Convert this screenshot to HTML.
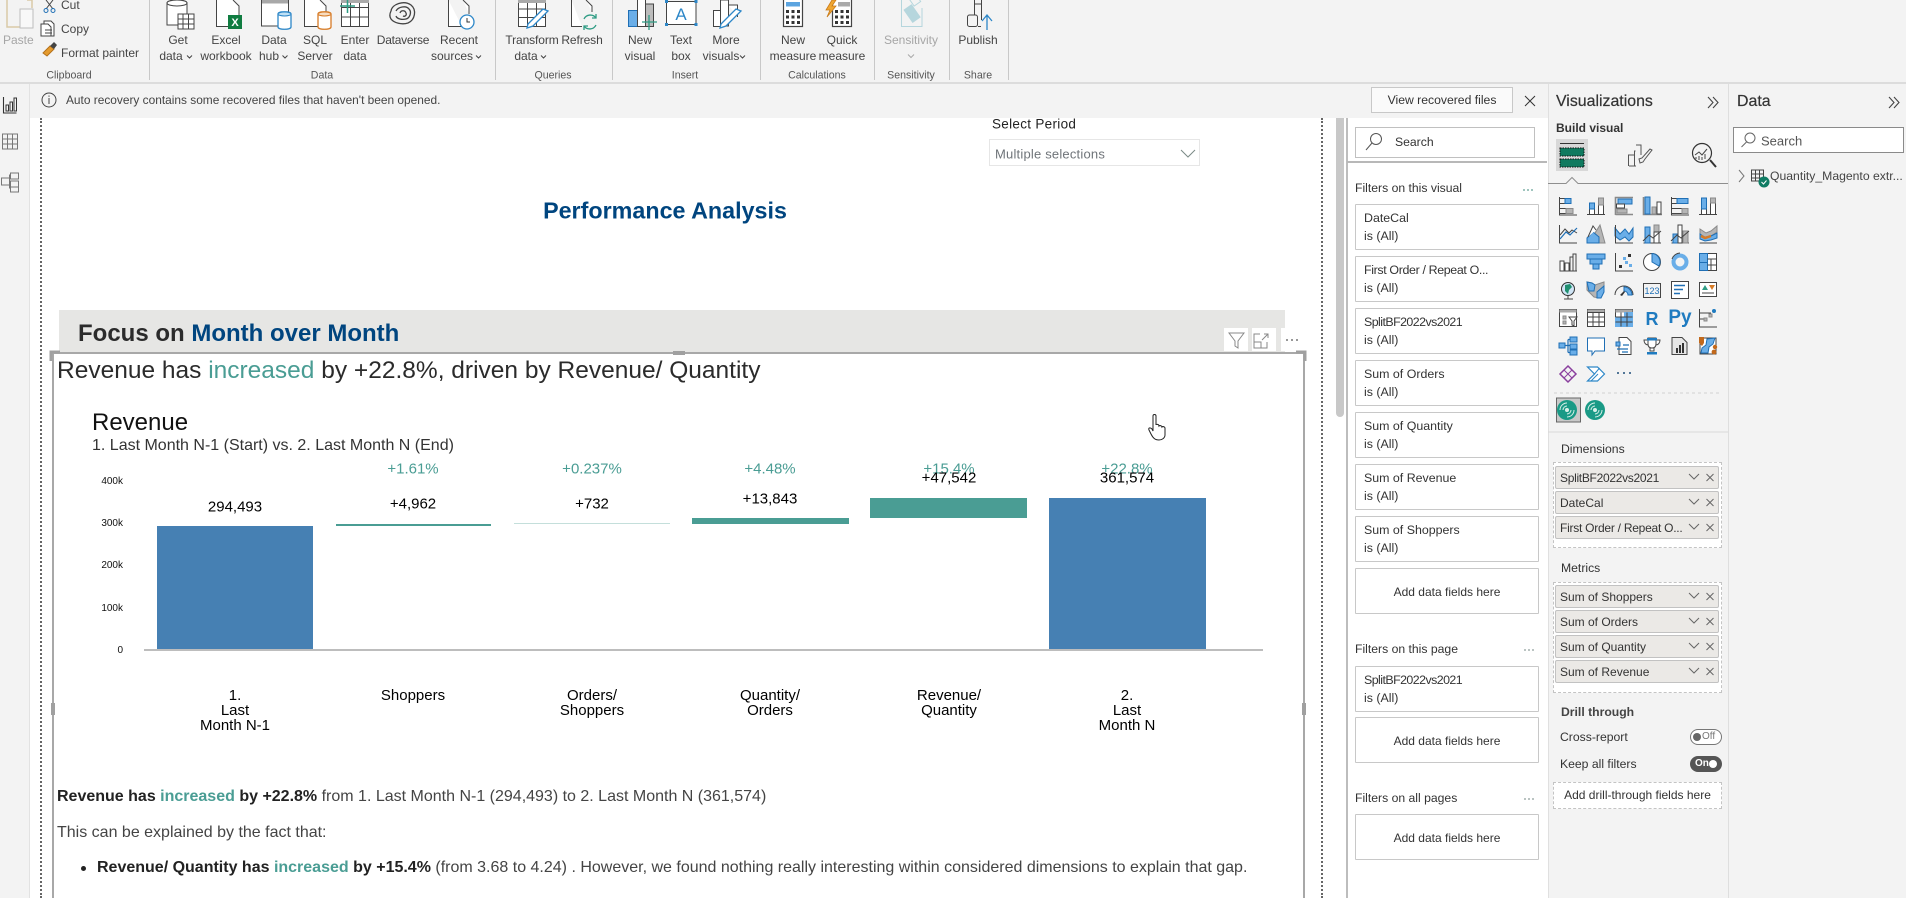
<!DOCTYPE html>
<html lang="en"><head><meta charset="utf-8"><title>Power BI Desktop</title>
<style>
html,body{margin:0;padding:0;width:1906px;height:898px;overflow:hidden;background:#fff;font-family:"Liberation Sans",Arial,sans-serif;color:#333}
div{box-sizing:border-box}
.a{position:absolute}
.t,.c{position:absolute;white-space:nowrap;line-height:1}
.t{transform:translateY(-50%)}
.c{transform:translate(-50%,-50%);text-align:center}
.r .c,.r .t{font-size:12px;color:#444}
.r .l{font-size:10.6px;color:#555}
.sep{position:absolute;top:0;height:80px;width:1px;background:#c8c8c8}
.card{position:absolute;left:1355px;width:184px;height:46px;background:#fff;border:1.5px solid #c8c8c8;border-radius:1px}
.card span{position:absolute;left:8px;font-size:12.4px;color:#333;white-space:nowrap;line-height:1;transform:translateY(-50%)}
.card .x{left:0;right:0;text-align:center;top:23px;font-size:12px}
.pill{position:absolute;left:1555px;width:164px;height:23px;background:#ebe9e6;border:1px solid #c2c2c2;border-radius:2px;font-size:12px;line-height:22px;padding-left:4px;color:#333;white-space:nowrap;overflow:hidden}
.dash{position:absolute;left:1553px;width:169px;border:1px dashed #c4c4c4;background:#fff}
.h{font-size:12.2px;color:#333}
.cv{font-family:"Liberation Sans",Arial,sans-serif;color:#000;font-size:15px}
.teal{color:#4a9d94}
.pct{color:#4a9d94;font-size:15px}
svg text{font-family:"Liberation Sans",Arial,sans-serif}
.k{stroke:#444;fill:none;stroke-width:1}
.w{stroke:#444;fill:#fff;stroke-width:1}
.b{fill:#6aaee8;stroke:#1f6fb5;stroke-width:1}
.u{fill:none;stroke:#1f6fb5;stroke-width:1.2}
.g{fill:#b5b5b5;stroke:#8a8a8a;stroke-width:1}
</style></head><body>

<!-- backgrounds -->
<div class="a" style="left:0;top:0;width:1906px;height:82px;background:#f3f3f3"></div>
<div class="a" style="left:0;top:82px;width:1906px;height:2px;background:#dcdcdc"></div>
<div class="a" style="left:0;top:84px;width:1906px;height:34px;background:#f3f3f3"></div>
<div class="a" style="left:0;top:84px;width:30px;height:814px;background:#f3f3f3;border-right:1px solid #e2e2e2"></div>
<div class="a" style="left:1336px;top:118px;width:8px;height:299px;background:#c8c8c8;border-radius:0 0 4px 4px"></div>
<div class="a" style="left:1346px;top:118px;width:2px;height:780px;background:#bdbdbd"></div>
<div class="a" style="left:1548px;top:84px;width:358px;height:814px;background:#f3f3f3;border-left:1px solid #e0e0e0"></div>
<div class="a" style="left:1728px;top:84px;width:1px;height:814px;background:#dedede"></div>

<!-- ribbon text -->
<div class="r">
<div class="t" style="left:3px;top:40px;color:#a6a6a6">Paste</div>
<div class="t" style="left:61px;top:5px">Cut</div>
<div class="t" style="left:61px;top:29px">Copy</div>
<div class="t" style="left:61px;top:53px">Format painter</div>
<div class="c l" style="left:69px;top:76px">Clipboard</div>
<div class="c" style="left:178px;top:40px">Get</div><div class="c" style="left:171px;top:56px">data</div>
<div class="c" style="left:226px;top:40px">Excel</div><div class="c" style="left:226px;top:56px">workbook</div>
<div class="c" style="left:274px;top:40px">Data</div><div class="c" style="left:269px;top:56px">hub</div>
<div class="c" style="left:315px;top:40px">SQL</div><div class="c" style="left:315px;top:56px">Server</div>
<div class="c" style="left:355px;top:40px">Enter</div><div class="c" style="left:355px;top:56px">data</div>
<div class="c" style="left:403px;top:40px;letter-spacing:-.25px">Dataverse</div>
<div class="c" style="left:459px;top:40px">Recent</div><div class="c" style="left:452px;top:56px">sources</div>
<div class="c l" style="left:322px;top:76px">Data</div>
<div class="c" style="left:532px;top:40px;letter-spacing:-.1px">Transform</div><div class="c" style="left:526px;top:56px">data</div>
<div class="c" style="left:582px;top:40px;letter-spacing:-.1px">Refresh</div>
<div class="c l" style="left:553px;top:76px">Queries</div>
<div class="c" style="left:640px;top:40px">New</div><div class="c" style="left:640px;top:56px">visual</div>
<div class="c" style="left:681px;top:40px">Text</div><div class="c" style="left:681px;top:56px">box</div>
<div class="c" style="left:726px;top:40px">More</div><div class="c" style="left:721px;top:56px">visuals</div>
<div class="c l" style="left:685px;top:76px">Insert</div>
<div class="c" style="left:793px;top:40px">New</div><div class="c" style="left:793px;top:56px">measure</div>
<div class="c" style="left:842px;top:40px">Quick</div><div class="c" style="left:842px;top:56px">measure</div>
<div class="c l" style="left:817px;top:76px">Calculations</div>
<div class="c" style="left:911px;top:40px;color:#a6a6a6">Sensitivity</div>
<div class="c l" style="left:911px;top:76px">Sensitivity</div>
<div class="c" style="left:978px;top:40px">Publish</div>
<div class="c l" style="left:978px;top:76px">Share</div>
</div>
<div class="sep" style="left:149px"></div><div class="sep" style="left:495px"></div><div class="sep" style="left:612px"></div><div class="sep" style="left:760px"></div><div class="sep" style="left:874px"></div><div class="sep" style="left:949px"></div><div class="sep" style="left:1008px"></div>

<!-- notification bar -->
<div class="t" style="left:66px;top:101px;font-size:11.9px;color:#444">Auto recovery contains some recovered files that haven't been opened.</div>
<div class="a" style="left:1371px;top:87px;width:142px;height:26px;background:#fafafa;border:1px solid #c8c8c8;font-size:12.2px;line-height:25px;text-align:center;color:#333">View recovered files</div>

<!-- canvas -->
<div class="a" style="left:40px;top:118px;width:0;height:780px;border-left:2px dotted #666"></div>
<div class="a" style="left:1321px;top:118px;width:0;height:780px;border-left:2px dotted #666"></div>
<div class="t" style="left:992px;top:124px;font-size:13.5px;color:#222;letter-spacing:.3px">Select Period</div>
<div class="a" style="left:989px;top:139px;width:211px;height:27px;border:1px solid #e6e6e6;background:#fff"></div>
<div class="t" style="left:995px;top:154px;font-size:13px;color:#6f7479;letter-spacing:.2px">Multiple selections</div>
<div class="c" style="left:665px;top:211px;font-size:23.3px;font-weight:bold;color:#00457f">Performance Analysis</div>
<div class="a" style="left:59px;top:310px;width:1226px;height:42px;background:#e6e6e4"></div>
<div class="t" style="left:78px;top:334px;font-size:24px;font-weight:bold;color:#2b2b2b">Focus on <span style="color:#00457f">Month over Month</span></div>
<div class="a" style="left:1224px;top:328px;width:24px;height:23px;background:#fff"></div>
<div class="a" style="left:1252px;top:328px;width:24px;height:23px;background:#fff"></div>
<div class="a" style="left:1281px;top:328px;width:24px;height:23px;background:#fff"></div>

<!-- visual -->
<div class="a" style="left:52px;top:352px;width:1253px;height:546px;border:2px solid #a8a8a8;border-bottom:0;background:#fff"></div>
<div class="t" style="left:57px;top:371px;font-size:24.5px;color:#2b2b2b">Revenue has <span class="teal">increased</span> by +22.8%, driven by Revenue/ Quantity</div>
<div class="t" style="left:92px;top:423px;font-size:24px;color:#111">Revenue</div>
<div class="t" style="left:92px;top:446px;font-size:16px;color:#333">1. Last Month N-1 (Start) vs. 2. Last Month N (End)</div>

<div class="c pct" style="left:413px;top:469px">+1.61%</div>
<div class="c pct" style="left:592px;top:469px">+0.237%</div>
<div class="c pct" style="left:770px;top:469px">+4.48%</div>
<div class="c pct" style="left:949px;top:469px">+15.4%</div>
<div class="c pct" style="left:1127px;top:469px">+22.8%</div>
<div class="c cv" style="left:235px;top:507px">294,493</div>
<div class="c cv" style="left:413px;top:504px">+4,962</div>
<div class="c cv" style="left:592px;top:504px">+732</div>
<div class="c cv" style="left:770px;top:499px">+13,843</div>
<div class="c cv" style="left:949px;top:478px">+47,542</div>
<div class="c cv" style="left:1127px;top:478px">361,574</div>

<div class="a" style="left:157px;top:526px;width:156px;height:124px;background:#4680b3"></div>
<div class="a" style="left:336px;top:524px;width:155px;height:2px;background:#4a9d94"></div>
<div class="a" style="left:514px;top:523px;width:156px;height:1px;background:#c4dfdb"></div>
<div class="a" style="left:692px;top:518px;width:157px;height:6px;background:#4a9d94"></div>
<div class="a" style="left:870px;top:498px;width:157px;height:20px;background:#4a9d94"></div>
<div class="a" style="left:1049px;top:498px;width:157px;height:152px;background:#4680b3"></div>
<div class="a" style="left:144px;top:649px;width:1119px;height:2px;background:#bdbdbd"></div>

<div class="a" style="left:83px;top:476px;width:40px;text-align:right;font-size:10px;color:#111;line-height:12px">400k</div>
<div class="a" style="left:83px;top:518px;width:40px;text-align:right;font-size:10px;color:#111;line-height:12px">300k</div>
<div class="a" style="left:83px;top:560px;width:40px;text-align:right;font-size:10px;color:#111;line-height:12px">200k</div>
<div class="a" style="left:83px;top:603px;width:40px;text-align:right;font-size:10px;color:#111;line-height:12px">100k</div>
<div class="a" style="left:83px;top:645px;width:40px;text-align:right;font-size:10px;color:#111;line-height:12px">0</div>

<div class="a cv" style="left:135px;top:688px;width:200px;text-align:center;line-height:15px">1.<br>Last<br>Month N-1</div>
<div class="a cv" style="left:313px;top:688px;width:200px;text-align:center;line-height:15px">Shoppers</div>
<div class="a cv" style="left:492px;top:688px;width:200px;text-align:center;line-height:15px">Orders/<br>Shoppers</div>
<div class="a cv" style="left:670px;top:688px;width:200px;text-align:center;line-height:15px">Quantity/<br>Orders</div>
<div class="a cv" style="left:849px;top:688px;width:200px;text-align:center;line-height:15px">Revenue/<br>Quantity</div>
<div class="a cv" style="left:1027px;top:688px;width:200px;text-align:center;line-height:15px">2.<br>Last<br>Month N</div>

<div class="t" style="left:57px;top:797px;font-size:16px;color:#444"><b style="color:#222">Revenue has <span class="teal">increased</span> by +22.8%</b> from 1. Last Month N-1 (294,493) to 2. Last Month N (361,574)</div>
<div class="t" style="left:57px;top:833px;font-size:16px;color:#444">This can be explained by the fact that:</div>
<div class="a" style="left:81px;top:866px;width:5px;height:5px;border-radius:50%;background:#222"></div>
<div class="t" style="left:97px;top:868px;font-size:16px;color:#444"><b style="color:#222">Revenue/ Quantity has <span class="teal">increased</span> by +15.4%</b> (from 3.68 to 4.24) . However, we found nothing really interesting within considered dimensions to explain that gap.</div>

<!-- filter pane -->
<div class="a" style="left:1355px;top:127px;width:180px;height:31px;border:1.5px solid #c0c0c0;background:#fff"></div>
<div class="t h" style="left:1395px;top:142px">Search</div>
<div class="a" style="left:1347px;top:161px;width:200px;height:2px;background:#b8b8b8"></div>
<div class="t h" style="left:1355px;top:188px">Filters on this visual</div>
<div class="card" style="top:204px"><span style="top:13px">DateCal</span><span style="top:31px">is (All)</span></div>
<div class="card" style="top:256px"><span style="top:13px;letter-spacing:-.35px">First Order / Repeat O...</span><span style="top:31px">is (All)</span></div>
<div class="card" style="top:308px"><span style="top:13px;letter-spacing:-.55px">SplitBF2022vs2021</span><span style="top:31px">is (All)</span></div>
<div class="card" style="top:360px"><span style="top:13px">Sum of Orders</span><span style="top:31px">is (All)</span></div>
<div class="card" style="top:412px"><span style="top:13px">Sum of Quantity</span><span style="top:31px">is (All)</span></div>
<div class="card" style="top:464px"><span style="top:13px">Sum of Revenue</span><span style="top:31px">is (All)</span></div>
<div class="card" style="top:516px"><span style="top:13px">Sum of Shoppers</span><span style="top:31px">is (All)</span></div>
<div class="card" style="top:568px"><span class="x">Add data fields here</span></div>
<div class="t h" style="left:1355px;top:649px">Filters on this page</div>
<div class="card" style="top:666px"><span style="top:13px;letter-spacing:-.55px">SplitBF2022vs2021</span><span style="top:31px">is (All)</span></div>
<div class="card" style="top:717px"><span class="x">Add data fields here</span></div>
<div class="t h" style="left:1355px;top:798px">Filters on all pages</div>
<div class="card" style="top:814px"><span class="x">Add data fields here</span></div>

<!-- viz pane -->
<div class="t" style="left:1556px;top:102px;font-size:15.9px;color:#333;-webkit-text-stroke:.2px #333">Visualizations</div>
<div class="t" style="left:1556px;top:128px;font-size:12px;font-weight:bold;color:#333">Build visual</div>
<div class="a" style="left:1556px;top:139px;width:32px;height:32px;background:#d8d8d8"></div>
<div class="t h" style="left:1561px;top:449px">Dimensions</div>
<div class="dash" style="top:462px;height:86px"></div>
<div class="pill" style="top:466px;letter-spacing:-.3px">SplitBF2022vs2021</div>
<div class="pill" style="top:491px">DateCal</div>
<div class="pill" style="top:516px;letter-spacing:-.25px">First Order / Repeat O...</div>
<div class="t h" style="left:1561px;top:568px">Metrics</div>
<div class="dash" style="top:582px;height:111px"></div>
<div class="pill" style="top:585px">Sum of Shoppers</div>
<div class="pill" style="top:610px">Sum of Orders</div>
<div class="pill" style="top:635px">Sum of Quantity</div>
<div class="pill" style="top:660px">Sum of Revenue</div>
<div class="t" style="left:1561px;top:712px;font-size:12.2px;font-weight:bold;color:#444">Drill through</div>
<div class="t h" style="left:1560px;top:737px">Cross-report</div>
<div class="t h" style="left:1560px;top:764px">Keep all filters</div>
<div class="a" style="left:1690px;top:729px;width:32px;height:16px;border:1px solid #777;border-radius:8px;background:#fff"></div>
<div class="t" style="left:1702px;top:737px;font-size:10px;color:#777">Off</div>
<div class="a" style="left:1693px;top:733px;width:8px;height:8px;border-radius:50%;background:#666"></div>
<div class="a" style="left:1690px;top:756px;width:32px;height:16px;border-radius:8px;background:#555"></div>
<div class="t" style="left:1695px;top:764px;font-size:10px;font-weight:bold;color:#fff">On</div>
<div class="a" style="left:1709px;top:760px;width:8px;height:8px;border-radius:50%;background:#fff"></div>
<div class="dash" style="top:782px;height:27px;text-align:center;font-size:12px;line-height:25px;color:#333">Add drill-through fields here</div>

<!-- data pane -->
<div class="t" style="left:1737px;top:102px;font-size:15.9px;color:#333;-webkit-text-stroke:.2px #333">Data</div>
<div class="a" style="left:1733px;top:127px;width:171px;height:26px;border:1.5px solid #8a8a8a;background:#fff"></div>
<div class="t" style="left:1761px;top:141px;font-size:13px;color:#555">Search</div>
<div class="t h" style="left:1770px;top:176px;color:#444">Quantity_Magento extr...</div>

<!-- icons -->
<svg class="a" style="left:0;top:0" width="1906" height="898" viewBox="0 0 1906 898" xmlns="http://www.w3.org/2000/svg">
<!-- clipboard -->
<path d="M7 0V27H20M27 0h5v8" fill="none" stroke="#d9c9a8" stroke-width="1.5"/><rect x="20" y="9" width="13" height="19" fill="#f8f8f8" stroke="#bdbdbd"/>
<path d="M46 0l7 9M53 0l-7 9" stroke="#444" fill="none"/><circle cx="46" cy="10.500" r="2" fill="none" stroke="#1f6fb5"/><circle cx="53" cy="10.500" r="2" fill="none" stroke="#1f6fb5"/>
<path d="M41 24h7l3 3v9h-10zM44 24v-3h7l3 3v12h-3" fill="#fff" stroke="#444"/><path d="M46 30h7M46 33h7" stroke="#444" fill="none" transform="translate(-1 0)"/>
<path d="M43 53l7-7 4 3-7 7z" fill="#e59b2e" stroke="#b3701b"/><path d="M50 46l4-4 3 3-3 4z" fill="#444"/>
<!-- get data -->
<path d="M167 3c0-4 20-4 20 0v22h-20z" fill="#fff" stroke="#444"/><ellipse cx="177" cy="3" rx="10" ry="3" fill="#fff" stroke="#444"/>
<g stroke="#444" fill="#fff"><rect x="178" y="14" width="16" height="15"/><path d="M178 19h16M178 24h16M183 14v15M188.500 14v15" fill="none"/></g>
<!-- excel -->
<path d="M216.500 0V26.500H239V6l-6-6" fill="#fff" stroke="#444"/><rect x="228" y="15" width="14" height="14" fill="#107c41"/><text x="235" y="26" font-size="11" font-weight="bold" fill="#fff" text-anchor="middle">X</text>
<!-- data hub -->
<rect x="261.500" y="-1" width="27" height="27" fill="#fff" stroke="#444"/><rect x="262" y="0" width="26" height="3.500" fill="#a8a8a8"/><path d="M278 14c0-3 13-3 13 0v13c0 3-13 3-13 0z" fill="#fff" stroke="#2d87c8" stroke-width="1.300"/><ellipse cx="284.500" cy="14" rx="6.500" ry="2" fill="#bfe0f5" stroke="#2d87c8"/>
<!-- sql -->
<path d="M304.500 0V26.500H326V6l-6-6" fill="#fff" stroke="#444"/><path d="M318 14c0-3 13-3 13 0v13c0 3-13 3-13 0z" fill="#fff" stroke="#d77b26" stroke-width="1.300"/><ellipse cx="324.500" cy="14" rx="6.500" ry="2" fill="#f7dcc0" stroke="#d77b26"/>
<!-- enter data -->
<g stroke="#444" fill="none"><rect x="341.500" y="-1" width="27" height="27.500" fill="#fff"/><path d="M341.500 7.500h27M341.500 17h27M350.500 0v26.500M359.500 0v26.500"/></g><rect x="341" y="0" width="28" height="3" fill="#aaa"/><path d="M340 6h15M347.500 0v13" stroke="#2e9c84" stroke-width="1.500" fill="none"/>
<!-- dataverse -->
<g fill="none" stroke="#444" stroke-width="1.300"><path d="M391 11c1-7 13-11 20-6 6 5 4 15-3 18-6 2-14 0-17-4-2-3-1-6 0-8"/><path d="M396 11c2-4 10-6 13-2 3 3 1 9-3 10-4 1-9 0-10-3"/><path d="M400 13c1-3 5-3 6 0 1 2-1 4-3 3"/></g>
<!-- recent -->
<path d="M448.500 0V26.500H462M469 14V6l-6-6" fill="#fff" stroke="#444"/><circle cx="467" cy="22" r="7" fill="#fff" stroke="#2d87c8" stroke-width="1.300"/><path d="M467 18v4h3" fill="none" stroke="#333"/>
<!-- transform -->
<g stroke="#444" fill="none"><rect x="518.500" y="-1" width="27" height="27.500" fill="#fff"/><path d="M518.500 9h27M518.500 17.500h27M527.500 0v26.500M536.500 0v26.500"/></g><rect x="518" y="0" width="28" height="3" fill="#aaa"/><path d="M528 24l15-15 5 2-15 15-6 2z" fill="#fff" stroke="#2d87c8" stroke-width="1.300"/>
<!-- refresh -->
<path d="M571.500 0V26.500H582M592 12V6l-6-6" fill="#fff" stroke="#444"/><g fill="none" stroke="#2e9c84" stroke-width="1.300"><path d="M584 19a7 7 0 0 1 12-1M596 25a7 7 0 0 1-12 1"/><path d="M596 14v4h-4M584 30v-4h4"/></g>
<!-- new visual -->
<rect x="628.500" y="10.500" width="9" height="16" fill="#6aaee8" stroke="#1f6fb5"/><rect x="637.500" y="-1" width="8" height="27.500" fill="#fff" stroke="#444"/><rect x="645.500" y="4" width="8" height="22.500" fill="#bcbcbc" stroke="#444"/><path d="M642 22h15M649 15v15" stroke="#2e9c84" stroke-width="1.300" fill="none"/>
<!-- text box -->
<rect x="666.500" y="1.500" width="29.500" height="23" fill="#fff" stroke="#444"/><g fill="#2d87c8"><rect x="665" y="0" width="3" height="3"/><rect x="694.500" y="0" width="3" height="3"/><rect x="665" y="23" width="3" height="3"/><rect x="694.500" y="23" width="3" height="3"/></g><text x="681" y="20" font-size="17" fill="#2d87c8" text-anchor="middle">A</text>
<!-- more visuals -->
<path d="M713.500 10.500h7v16h-7zM720.500 0h8v26h-8zM728.500 5h9v12" fill="#fff" stroke="#444"/><path d="M721 24l15-15 5 2-15 15-6 2z" fill="#fff" stroke="#2d87c8" stroke-width="1.300"/>
<!-- measures -->
<rect x="783.500" y="-2" width="19" height="28.500" fill="#fff" stroke="#444" stroke-width="1.200"/><rect x="786" y="2" width="14" height="4.500" fill="#5ba4e0"/><g fill="#333"><rect x="786" y="10" width="3" height="3"/><rect x="791.500" y="10" width="3" height="3"/><rect x="797" y="10" width="3" height="3"/><rect x="786" y="15.500" width="3" height="3"/><rect x="791.500" y="15.500" width="3" height="3"/><rect x="797" y="15.500" width="3" height="3"/><rect x="786" y="21" width="3" height="3"/><rect x="791.500" y="21" width="3" height="3"/><rect x="797" y="21" width="3" height="3"/></g>
<rect x="832.500" y="-2" width="19" height="28.500" fill="#fff" stroke="#444" stroke-width="1.200"/><rect x="838" y="2" width="12" height="4.500" fill="#aaa"/><g fill="#333"><rect x="835" y="10" width="3" height="3"/><rect x="840.500" y="10" width="3" height="3"/><rect x="846" y="10" width="3" height="3"/><rect x="835" y="15.500" width="3" height="3"/><rect x="840.500" y="15.500" width="3" height="3"/><rect x="846" y="15.500" width="3" height="3"/><rect x="835" y="21" width="3" height="3"/><rect x="840.500" y="21" width="3" height="3"/><rect x="846" y="21" width="3" height="3"/></g><path d="M832 0l-6 10h4l-3 7 9-11h-4l4-6z" fill="#f0a732" stroke="#c97a17" stroke-width=".8"/>
<!-- sensitivity -->
<path d="M901.500 0V26.500H922V8" fill="#f3f3f3" stroke="#b6d6dd"/><g transform="rotate(-35 912 10)"><rect x="905" y="5" width="10" height="16" fill="#b6d6dd"/><rect x="916" y="0" width="8" height="8" fill="none" stroke="#b6d6dd"/></g><path d="M908 54.500l3 3 3-3" fill="none" stroke="#a8a8a8"/>
<!-- publish -->
<path d="M974.500 15V4h7v-4M974.500 4V0M981.500 4v16" fill="none" stroke="#444"/><rect x="967.500" y="15" width="10" height="11.500" rx="2" fill="none" stroke="#444"/><path d="M981 26.500h-3" stroke="#444"/><path d="M987 30V15M982 21l5-6 5 6" fill="none" stroke="#2d87c8" stroke-width="1.300"/>
<!-- ribbon carets -->
<g fill="none" stroke="#444" stroke-width="1"><path d="M187 55.500l2.500 2.500 2.500-2.500M282.500 55.500l2.500 2.500 2.500-2.500M476 55.500l2.500 2.500 2.500-2.500M541 55.500l2.500 2.500 2.500-2.500M740 55.500l2.500 2.500 2.500-2.500"/></g>

<!-- left nav -->
<g fill="none" stroke="#333"><path d="M3.500 97v16h13" stroke-width="1.100"/><rect x="6" y="105" width="2.500" height="6"/><rect x="10" y="102" width="2.500" height="9"/><rect x="14" y="98" width="2.500" height="13"/></g>
<g fill="none" stroke="#777"><rect x="2.500" y="134" width="15" height="15"/><path d="M2.500 139h15M2.500 144h15M7.500 134v15M12.500 134v15"/></g>
<g fill="none" stroke="#777"><rect x="10.500" y="173" width="8" height="6"/><rect x="1.500" y="178" width="8" height="7"/><rect x="10.500" y="181" width="8" height="6"/><rect x="10.500" y="187" width="8" height="5"/><path d="M9.500 178v-3h1M9.500 185v3h1"/></g>
<!-- notif -->
<circle cx="49" cy="100" r="7" fill="none" stroke="#444"/><path d="M49 98v6M49 95.500v1.200" stroke="#444" fill="none"/>
<path d="M1525 96l10 10M1535 96l-10 10" stroke="#333" fill="none"/>
<!-- handles -->
<path d="M51 361v-9h9" fill="none" stroke="#a0a0a0" stroke-width="3"/><path d="M1296 352h9v9" fill="none" stroke="#a0a0a0" stroke-width="3"/>
<rect x="673" y="351" width="12" height="4" fill="#a0a0a0"/><rect x="51" y="703" width="4" height="12" fill="#a0a0a0"/><rect x="1302" y="703" width="4" height="12" fill="#a0a0a0"/>
<!-- dropdown chevron -->
<path d="M1181 150l7 7 7-7" fill="none" stroke="#7b8a86"/>
<!-- visual header icons -->
<path d="M1229 333h15l-6 8v7l-3-2v-5z" fill="none" stroke="#888"/>
<path d="M1260 334h-6v14h13v-6M1254 342h7v6M1262 340l6-6M1264 334h4v4" fill="none" stroke="#888"/>
<g fill="#777"><circle cx="1287" cy="340" r="1"/><circle cx="1292" cy="340" r="1"/><circle cx="1297" cy="340" r="1"/></g>
<!-- hand cursor -->
<path d="M1153 418c0-2 3-2 3 0v9c0-1 3-1 3 1 1-1 3 0 3 1 1-1 3 0 3 1v7c0 3-3 5-6 5-4 0-6-2-8-6l-2-4c-1-2 1-3 3-1l1 2z" fill="#fff" stroke="#222" transform="translate(0 -2)"/>
<!-- filter pane icons -->
<circle cx="1376" cy="139" r="5.500" fill="none" stroke="#555"/><path d="M1372 143l-6 7" stroke="#555" fill="none"/>
<g fill="#5b9c90"><circle cx="1524" cy="190" r=".9"/><circle cx="1528" cy="190" r=".9"/><circle cx="1532" cy="190" r=".9"/></g><g fill="#8a9a96"><circle cx="1525" cy="650" r=".9"/><circle cx="1529" cy="650" r=".9"/><circle cx="1533" cy="650" r=".9"/><circle cx="1525" cy="799" r=".9"/><circle cx="1529" cy="799" r=".9"/><circle cx="1533" cy="799" r=".9"/></g>
<!-- pane chevrons -->
<path d="M1708 97l5 5.500-5 5.500M1713 97l5 5.500-5 5.500" fill="none" stroke="#444" stroke-width="1.100"/>
<path d="M1889 97l5 5.500-5 5.500M1894 97l5 5.500-5 5.500" fill="none" stroke="#444" stroke-width="1.100"/>
<!-- data search & tree -->
<circle cx="1750" cy="138" r="5" fill="none" stroke="#666"/><path d="M1746.500 142l-5 5" stroke="#666" fill="none"/>
<path d="M1739 170l5 6-5 6" fill="none" stroke="#777"/>
<g fill="none" stroke="#444"><rect x="1751.500" y="170" width="12" height="11"/><path d="M1751.500 174h12M1751.500 178h12M1755.500 170v11M1759.500 170v11"/></g><circle cx="1764" cy="182" r="5.500" fill="#107c64"/><path d="M1761.500 182l2 2 3-3.500" fill="none" stroke="#fff"/>
<!-- build tabs -->
<path d="M1560 143.500h24" stroke="#333" fill="none"/>
<rect x="1560" y="148" width="24" height="8" fill="#107a5f" stroke="#111" stroke-dasharray="1.500 1"/><rect x="1560" y="159" width="24" height="8" fill="#107a5f" stroke="#111" stroke-dasharray="1.500 1"/>
<g fill="none" stroke="#555"><path d="M1628.500 166v-11h6M1634.500 166v-15h1M1636 145h5v10"/><path d="M1629 166h7"/><path d="M1650 149l-8 9-3 1 1 4 3-1 2-3 7-9z"/></g>
<g fill="none" stroke="#333" stroke-width="1.200"><circle cx="1702" cy="153" r="9.500"/><path d="M1710 160l6 7" stroke-width="2"/></g><path d="M1695 155l4-3 3 3 5-6M1696 159v-2M1699 160v-4M1702 160v-3M1705 159v-5" fill="none" stroke="#444"/>
<path d="M1548 183.500h18l6-6 6 6h150" fill="#f3f3f3" stroke="#8e8e8e" stroke-width="1"/>

<!-- viz gallery -->
<g transform="translate(1559 197)"><path class="k" d="M.5 0V18H18M.5 1.500H11v5H.5M.5 11.500H13v5H.5"/><rect class="b" x="6" y="1.500" width="6" height="5"/><rect class="g" x="7" y="11.500" width="7" height="5"/></g>
<g transform="translate(1587 197)"><path class="k" d="M0 17.500H18"/><rect class="w" x="2.500" y="6" width="5" height="11.500"/><rect class="b" x="2.500" y="6" width="5" height="6"/><rect class="w" x="11.500" y="1" width="5" height="16.500"/><rect class="g" x="11.500" y="1" width="5" height="7"/></g>
<g transform="translate(1615 197)"><path d="M.5 18V.5H18M.5 17.500H18" fill="none" stroke="#8a8a8a" stroke-width="1.600"/><rect class="b" x="3" y="2" width="14" height="5"/><rect class="w" x="1.500" y="7" width="8" height="4"/><rect class="g" x="2" y="12" width="10" height="4"/></g>
<g transform="translate(1643 197)"><path d="M.5 0V17.500H19" fill="none" stroke="#8a8a8a" stroke-width="1.600"/><rect class="b" x="2" y="0" width="5" height="17"/><rect class="g" x="9" y="10" width="4" height="7"/><rect class="w" x="14" y="5" width="4" height="12"/></g>
<g transform="translate(1671 197)"><path class="k" d="M.5 0V18H18M.5 1.500H17v5H.5M.5 11.500H17v5H.5"/><rect class="b" x="6" y="1.500" width="11" height="5"/><rect class="g" x="11" y="11.500" width="6" height="5"/></g>
<g transform="translate(1699 197)"><path class="k" d="M0 17.500H18"/><rect class="w" x="2.500" y="1" width="5" height="16.500"/><rect class="b" x="2.500" y="1" width="5" height="11"/><rect class="w" x="11.500" y="1" width="5" height="16.500"/><rect class="g" x="11.500" y="1" width="5" height="5"/></g>

<g transform="translate(1559 225)"><path class="k" d="M.5 0V18H18M1 10l5-6 4 4 3-3 5 3"/><path class="u" d="M1 14l6-7 4 3 7-7"/></g>
<g transform="translate(1587 225)"><path class="g" d="M8 8l5-8 5 18H10z"/><path class="b" d="M0 18v-5l6-6 6 5v6z"/><path d="M1 12l5-11 3 4" fill="#fff" stroke="#444"/></g>
<g transform="translate(1615 225)"><path class="b" d="M0 3l5 6 5-5 4 5 4-6v9l-4 4-4-4-5 3-5-4z"/><path class="k" d="M.5 0V18H18"/></g>
<g transform="translate(1643 225)"><path class="k" d="M.5 18H18"/><rect class="b" x="2" y="2" width="5" height="16"/><rect class="g" x="11" y="0" width="5" height="7"/><rect class="w" x="11" y="7" width="5" height="11"/><path class="k" d="M0 16l6-6 4 3 8-7"/></g>
<g transform="translate(1671 225)"><path class="k" d="M.5 18H18"/><rect class="b" x="2" y="9" width="5" height="9"/><rect class="w" x="7" y="0" width="4" height="18"/><rect class="g" x="12" y="6" width="5" height="12"/><path class="k" d="M0 16l6-6 4 3 8-7"/></g>
<g transform="translate(1699 225)"><path class="k" d="M.5 18H18"/><path class="g" d="M1 4l6 4 5-2 6-5v6l-6 4-6 1-5-3z"/><path class="b" d="M1 9l5 4 6-2 6-3v5l-6 2-6 1-5-2z"/><path d="M2 11l4 2 6-2" fill="none" stroke="#d77b26" stroke-width="2.500"/></g>

<g transform="translate(1559 253)"><path class="k" d="M.5 18H18"/><rect class="w" x="1" y="8" width="4" height="10"/><rect class="w" x="6" y="10" width="4" height="8"/><rect class="k" x="11" y="4" width="3" height="14"/><rect class="k" x="14" y="1" width="3" height="17"/></g>
<g transform="translate(1587 253)"><rect class="b" x="0" y="1" width="18" height="5"/><rect class="b" x="3" y="6" width="12" height="5"/><rect class="b" x="6" y="11" width="6" height="5"/></g>
<g transform="translate(1615 253)"><path class="k" d="M.5 0V18H18"/><rect x="4" y="12" width="3" height="3" fill="#333"/><rect x="8" y="4" width="3" height="3" fill="#6aaee8"/><rect x="13" y="1" width="3" height="3" fill="#333"/><rect x="14" y="11" width="3" height="3" fill="#6aaee8"/><rect x="10" y="8" width="3" height="3" fill="#6aaee8"/></g>
<g transform="translate(1643 253)"><circle class="w" cx="9" cy="9" r="8.500"/><path class="b" d="M9 9V.5a8.500 8.500 0 0 1 7 12.500z"/></g>
<g transform="translate(1671 253)"><circle cx="9" cy="9" r="6.500" fill="none" stroke="#6aaee8" stroke-width="4"/><path class="k" d="M9 0a9 9 0 0 0-8 6"/></g>
<g transform="translate(1699 253)"><rect class="w" x=".5" y=".5" width="17" height="17"/><rect class="b" x=".5" y=".5" width="8" height="9"/><rect class="b" x=".5" y="9.500" width="8" height="8"/><path class="k" d="M8.500 6h9M12 6v11.500M8.500 12h9"/></g>

<g transform="translate(1559 281)"><circle cx="9" cy="8" r="6.500" fill="#cfe4f5" stroke="#333"/><path d="M6 4l5-1 2 3-3 3-1 4-3-3z" fill="#1f8f6f"/><path class="k" d="M5 18h9M9 15v3"/></g>
<g transform="translate(1587 281)"><path class="g" d="M0 1l5 1 3 2 9-3v9l-5 7-5-1-3-3-4-4z"/><path class="b" d="M0 1l5 1 3 2-1 6H2zM10 11l7-6v6l-3 6h-4z"/></g>
<g transform="translate(1615 281)"><path class="k" d="M0 14a9 9 0 0 1 18 0"/><path class="b" d="M9 6a8 8 0 0 1 8 8h-4a4 4 0 0 0-4-4z"/><path d="M5 14l4-4 1 1-3 4z" fill="#333"/></g>
<g transform="translate(1643 281)"><rect class="k" x=".5" y="2.500" width="17" height="14"/><text x="9" y="13" font-size="9" fill="#1f6fb5" text-anchor="middle">123</text></g>
<g transform="translate(1671 281)"><rect class="w" x=".5" y=".5" width="17" height="17"/><path d="M3 4.500h11M3 8.500h9M3 12.500h6" stroke="#1f6fb5" stroke-width="1.600" fill="none"/></g>
<g transform="translate(1699 281)"><rect class="w" x=".5" y="1.500" width="17" height="14"/><path d="M3 9l3-5 3 5z" fill="#2e9c84"/><path d="M10 4h6l-3 5z" fill="#d77b26"/><path class="k" d="M3 12h12"/></g>

<g transform="translate(1559 309)"><rect class="w" x=".5" y=".5" width="17" height="17"/><rect x=".5" y=".5" width="17" height="3" fill="#aaa"/><rect class="g" x="4" y="7" width="3" height="3"/><rect class="g" x="4" y="12" width="3" height="3"/><path class="w" d="M10 8h8l-3 4v5l-2-1v-4z"/></g>
<g transform="translate(1587 309)"><rect class="w" x=".5" y=".5" width="17" height="17"/><rect x=".5" y=".5" width="17" height="3" fill="#aaa"/><path class="k" d="M.5 3.500h17M.5 8h17M.5 13h17M6 3.500v14M12 3.500v14"/></g>
<g transform="translate(1615 309)"><rect class="w" x=".5" y=".5" width="17" height="17"/><rect x=".5" y=".5" width="17" height="3" fill="#aaa"/><rect x="0" y="8" width="18" height="10" fill="#6aaee8"/><rect x="9" y="3" width="9" height="15" fill="#6aaee8"/><path class="k" d="M.5 8h17M.5 13h17M6 3.500v14M12 3.500v14"/></g>
<text x="1652" y="325" font-size="18" font-weight="bold" fill="#1f7bc0" text-anchor="middle">R</text>
<text x="1680" y="323" font-size="19" font-weight="bold" fill="#1f7bc0" text-anchor="middle">Py</text>
<g transform="translate(1699 309)"><path class="k" d="M.5 0V18H18M.5 4H12M.5 10H8"/><rect class="g" x="5" y="9" width="3" height="3"/><rect class="g" x="10" y="5" width="3" height="3"/><circle cx="15" cy="2" r="2" fill="#1f7bc0"/></g>

<g transform="translate(1559 337)"><rect class="b" x="0" y="6" width="6" height="5"/><rect class="b" x="11" y="0" width="7" height="5"/><rect class="b" x="11" y="7" width="7" height="5"/><rect class="b" x="11" y="13" width="7" height="5"/><path class="u" d="M6 8.500h5M9 2.500v13M9 2.500h2M9 15.500h2"/></g>
<g transform="translate(1587 337)"><path d="M.5 1h17v13H8l-3 4v-4H.5z" fill="#fff" stroke="#1f6fb5"/></g>
<g transform="translate(1615 337)"><path d="M4 .5h8l4 4v13H4z" fill="#fff" stroke="#444"/><rect class="b" x="1" y="5" width="4" height="4"/><path class="u" d="M8 8h6M2 12h11M7 15h6"/></g>
<g transform="translate(1643 337)"><path class="w" d="M5 1h8v6c0 3-2 4-4 4s-4-1-4-4zM5 3H1c0 3 2 5 4 5M13 3h4c0 3-2 5-4 5M7 11h4v3H7z"/><rect x="4" y="1" width="10" height="2.500" fill="#1f7bc0"/><rect x="4" y="15" width="10" height="2.500" fill="#1f7bc0"/></g>
<g transform="translate(1671 337)"><path d="M1 .5h10l5 5v12H1z" fill="#e6e6e6" stroke="#444"/><rect x="5" y="11" width="2" height="5" fill="#333"/><rect x="8" y="8" width="2" height="8" fill="#333"/><rect x="11" y="6" width="2" height="10" fill="#333"/></g>
<g transform="translate(1699 337)"><rect class="w" x="1" y="1" width="16" height="16" stroke="#1f6fb5"/><path class="b" d="M8 2l8-1-2 6-4 3-1 6H2l1-5 4-3z"/><path d="M0 0h5v6l-2 3-3-3z" fill="#c2691c"/><circle cx="16" cy="10" r="2.200" fill="#c2691c"/><circle cx="15" cy="15" r="2.400" fill="#c2691c"/></g>

<g transform="translate(1559 365)"><path d="M9 1l8 8-8 8-8-8z" fill="none" stroke="#8a3f9e" stroke-width="1.500"/><path d="M5 5l8 8M13 5l-8 8" fill="none" stroke="#8a3f9e"/></g>
<g transform="translate(1587 365)"><path d="M.5 2h10l7 7-7 7H.5l7-7z" fill="#fff" stroke="#2d87c8" stroke-width="1.200"/><path d="M7.500 9l5-6M4 16l7-7" fill="none" stroke="#2d87c8"/></g>
<g fill="#1f4f7a"><circle cx="1618" cy="373" r="1"/><circle cx="1624" cy="373" r="1"/><circle cx="1630" cy="373" r="1"/></g>

<path d="M1554 393h168" stroke="#d0d0d0" stroke-dasharray="3 3" fill="none"/>
<rect x="1556.500" y="398" width="24" height="24" fill="#c9c9c9" stroke="#666"/>
<g fill="none" stroke="#d9efe9" stroke-width="1"><circle cx="1567" cy="410" r="10" fill="#1a9a86" stroke="none"/><path d="M1560 410a7 7 0 0 1 7-7M1563 410a4 4 0 0 1 4-4M1574 410a7 7 0 0 1-7 7M1571 410a4 4 0 0 1-4 4"/><circle cx="1567" cy="410" r="2" fill="#d9efe9" stroke="none"/><circle cx="1595" cy="410" r="10" fill="#1a9a86" stroke="none"/><path d="M1588 410a7 7 0 0 1 7-7M1591 410a4 4 0 0 1 4-4M1602 410a7 7 0 0 1-7 7M1599 410a4 4 0 0 1-4 4"/><circle cx="1595" cy="410" r="2" fill="#d9efe9" stroke="none"/></g>
<path d="M1548 432h180" stroke="#d9d9d9" fill="none"/>

<!-- pill controls -->
<g fill="none" stroke="#666">
<path d="M1689 474l5 5 5-5M1706.500 474l7 7M1713.500 474l-7 7"/>
<path d="M1689 499l5 5 5-5M1706.500 499l7 7M1713.500 499l-7 7"/>
<path d="M1689 524l5 5 5-5M1706.500 524l7 7M1713.500 524l-7 7"/>
<path d="M1689 593l5 5 5-5M1706.500 593l7 7M1713.500 593l-7 7"/>
<path d="M1689 618l5 5 5-5M1706.500 618l7 7M1713.500 618l-7 7"/>
<path d="M1689 643l5 5 5-5M1706.500 643l7 7M1713.500 643l-7 7"/>
<path d="M1689 668l5 5 5-5M1706.500 668l7 7M1713.500 668l-7 7"/>
</g>
</svg>
</body></html>
